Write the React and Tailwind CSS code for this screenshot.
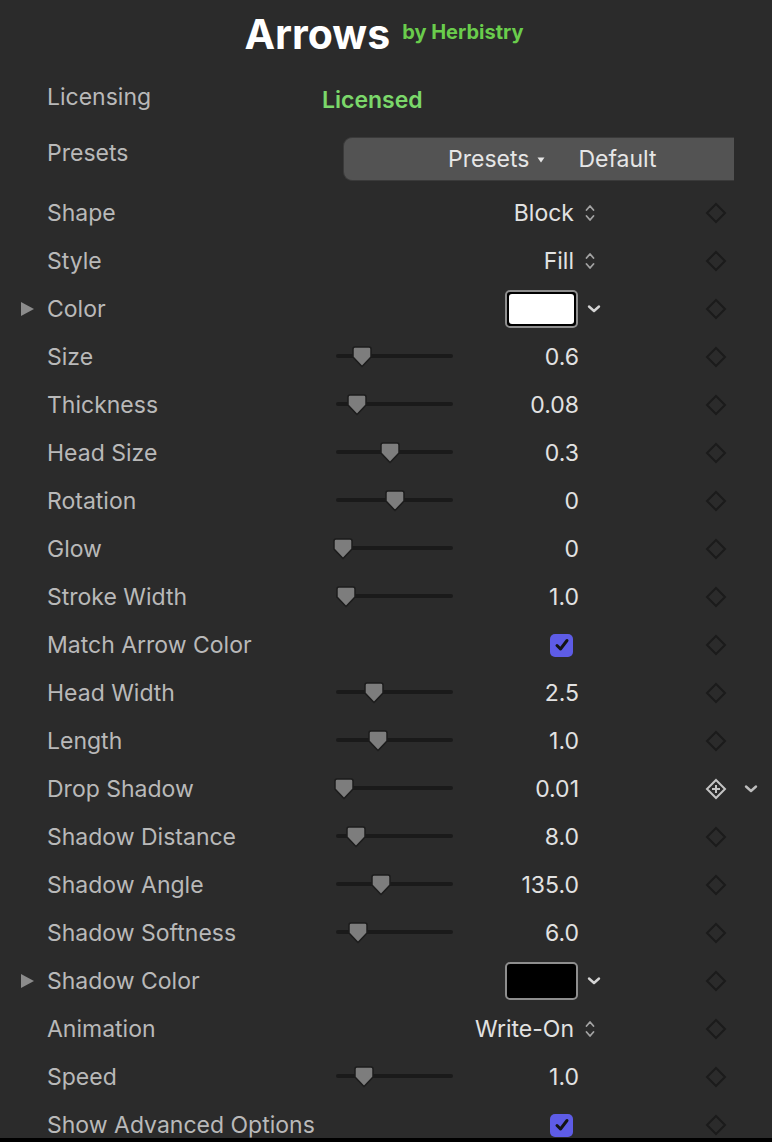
import React from 'react';

const rows = [
  { label: 'Shape', type: 'popup', value: 'Block' },
  { label: 'Style', type: 'popup', value: 'Fill' },
  { label: 'Color', type: 'color', value: '#ffffff', disclosure: true },
  { label: 'Size', type: 'slider', value: '0.6', thumb: 362 },
  { label: 'Thickness', type: 'slider', value: '0.08', thumb: 357 },
  { label: 'Head Size', type: 'slider', value: '0.3', thumb: 390 },
  { label: 'Rotation', type: 'slider', value: '0', thumb: 395 },
  { label: 'Glow', type: 'slider', value: '0', thumb: 343 },
  { label: 'Stroke Width', type: 'slider', value: '1.0', thumb: 346 },
  { label: 'Match Arrow Color', type: 'check' },
  { label: 'Head Width', type: 'slider', value: '2.5', thumb: 374 },
  { label: 'Length', type: 'slider', value: '1.0', thumb: 378 },
  { label: 'Drop Shadow', type: 'slider', value: '0.01', thumb: 344, keyed: true },
  { label: 'Shadow Distance', type: 'slider', value: '8.0', thumb: 356 },
  { label: 'Shadow Angle', type: 'slider', value: '135.0', thumb: 381 },
  { label: 'Shadow Softness', type: 'slider', value: '6.0', thumb: 358 },
  { label: 'Shadow Color', type: 'color', value: '#000000', disclosure: true },
  { label: 'Animation', type: 'popup', value: 'Write-On' },
  { label: 'Speed', type: 'slider', value: '1.0', thumb: 364 },
  { label: 'Show Advanced Options', type: 'check' },
];

function Diamond({ keyed }) {
  if (keyed) {
    return (
      <svg width="22" height="22" viewBox="0 0 22 22">
        <path d="M11 2 L20 11 L11 20 L2 11 Z" fill="none" stroke="#c4c4c4" strokeWidth="2" />
        <path d="M11 7 V15 M7 11 H15" stroke="#c4c4c4" strokeWidth="2" />
      </svg>
    );
  }
  return (
    <svg width="22" height="22" viewBox="0 0 22 22">
      <path d="M11 2 L20 11 L11 20 L2 11 Z" fill="none" stroke="#1b1b1b" strokeWidth="2" />
    </svg>
  );
}

function ChevronDown({ color = '#d4d4d4' }) {
  return (
    <svg width="14" height="10" viewBox="0 0 14 10">
      <path d="M2 2.5 L7 7 L12 2.5" fill="none" stroke={color} strokeWidth="2.4" strokeLinecap="round" strokeLinejoin="round" />
    </svg>
  );
}

function UpDown() {
  return (
    <svg width="12" height="22" viewBox="0 0 12 22">
      <path d="M2.5 8 L6 4 L9.5 8 M2.5 14 L6 18 L9.5 14" fill="none" stroke="#a3a3a3" strokeWidth="1.8" strokeLinecap="round" strokeLinejoin="round" />
    </svg>
  );
}

function Slider({ thumb }) {
  return (
    <div className="relative h-[22px] w-[117px]">
      <div className="absolute left-0 right-0 top-[8px] h-[4px] rounded-full bg-[#1a1a1a]" />
      <svg
        className="absolute top-0"
        style={{ left: thumb - 336 - 10 }}
        width="20"
        height="22"
        viewBox="0 0 20 22"
      >
        <path
          d="M3 1 H17 Q19 1 19 3 V11 L10 20.5 L1 11 V3 Q1 1 3 1 Z"
          fill="#7d7d7d"
          stroke="#1c1c1c"
          strokeWidth="1.5"
          strokeLinejoin="round"
        />
      </svg>
    </div>
  );
}

function Check() {
  return (
    <div className="flex h-[23px] w-[23px] items-center justify-center rounded-[5px] bg-[#5e5ce6]">
      <svg width="16" height="16" viewBox="0 0 16 16">
        <path d="M3 8.5 L6.5 12 L13 3.5" fill="none" stroke="#141414" strokeWidth="3" strokeLinecap="round" strokeLinejoin="round" />
      </svg>
    </div>
  );
}

function Row({ row }) {
  return (
    <div className="flex h-[48px] shrink-0 items-center">
      <div className="flex w-[47px] items-center pl-[20px]">
        {row.disclosure && (
          <svg width="14" height="16" viewBox="0 0 14 16">
            <path d="M1 1 L14 8 L1 15 Z" fill="#8c8c8c" />
          </svg>
        )}
      </div>
      <div className="w-[289px] text-[23px] text-[#b9b9b9]">{row.label}</div>
      <div className="w-[117px]">{row.type === 'slider' && <Slider thumb={row.thumb} />}</div>
      <div className="flex w-[126px] items-center justify-end text-[23px] text-[#e2e2e2]">
        {row.type === 'slider' && <span>{row.value}</span>}
        {row.type === 'popup' && (
          <span className="mr-[-17px] flex items-center gap-[10px]">
            {row.value}
            <UpDown />
          </span>
        )}
        {row.type === 'color' && (
          <div className="mr-[1px] h-[38px] w-[73px] rounded-[5px] border-2 border-[#8e8e8e] bg-black p-[2px]">
            <div className="h-full w-full rounded-[3px]" style={{ background: row.value }} />
          </div>
        )}
        {row.type === 'check' && (
          <div className="mr-[6px]">
            <Check />
          </div>
        )}
      </div>
      <div className="flex w-[126px] items-center pl-[8px]">
        {row.type === 'color' && <ChevronDown />}
      </div>
      <div className="flex w-[22px] items-center justify-center">
        <Diamond keyed={row.keyed} />
      </div>
      <div className="flex w-[37px] items-center justify-end pr-[6px]">
        {row.keyed && <ChevronDown color="#bdbdbd" />}
      </div>
    </div>
  );
}

export default function App() {
  return (
    <div className="flex h-[1142px] w-[772px] flex-col overflow-hidden bg-[#2b2b2b] font-['Inter',sans-serif]">
      <div className="flex h-[1138px] flex-col overflow-hidden">
        <div className="flex h-[73px] shrink-0 items-start justify-center pt-[8px] pr-[4px]">
          <span className="text-[41px] font-bold leading-[52px] text-white">Arrows</span>
          <span className="ml-[12px] mt-[9px] text-[20px] font-bold text-[#6acd4c]">by Herbistry</span>
        </div>
        <div className="flex h-[48px] shrink-0 items-center">
          <div className="w-[47px]" />
          <div className="w-[275px] text-[23px] text-[#b9b9b9]">Licensing</div>
          <div className="pt-[6px] text-[23px] font-semibold text-[#7bd86a]">Licensed</div>
        </div>
        <div className="flex h-[68px] shrink-0 items-center">
          <div className="w-[47px]" />
          <div className="w-[296px] pb-[4px] text-[23px] text-[#b9b9b9]">Presets</div>
          <div className="mt-[8px] flex h-[44px] w-[391px] items-center rounded-l-[9px] border border-r-0 border-[#3a3a3a] bg-[#535353] pl-[104px] text-[23px] text-[#e6e6e6]">
            <span>Presets</span>
            <svg className="ml-[8px] mt-[2px]" width="8" height="8" viewBox="0 0 8 8">
              <path d="M0.5 1.5 H7.5 L4 6.5 Z" fill="#e6e6e6" />
            </svg>
            <span className="ml-[33px]">Default</span>
          </div>
        </div>
        {rows.map((row) => (
          <Row key={row.label} row={row} />
        ))}
      </div>
      <div className="h-[4px] shrink-0 bg-black" />
    </div>
  );
}
